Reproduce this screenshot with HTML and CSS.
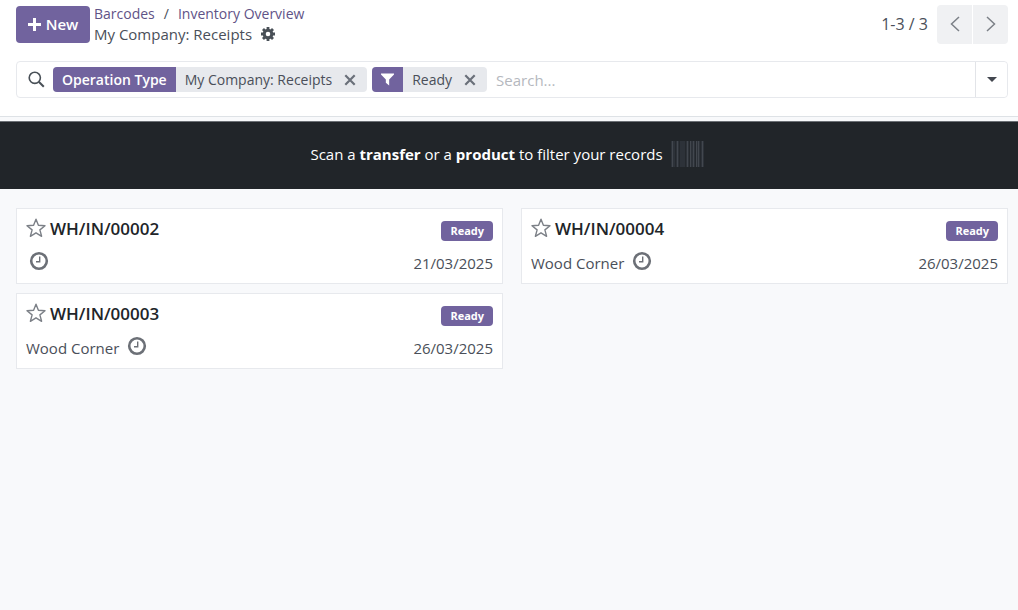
FILE: index.html
```html
<!DOCTYPE html>
<html lang="en">

<head>
    <meta charset="utf-8">
    <title>My Company: Receipts</title>
    <meta name="viewport" content="width=device-width, initial-scale=1">
    <link rel="stylesheet" href="styles.css">
</head>

<body>
    <!-- icons used more than once -->
    <svg class="sprite" aria-hidden="true">
        <symbol id="icon_star" viewBox="0 0 20 20">
            <path d="M10 1.2l2.4 6.1 6.6.4-5.1 4.2 1.7 6.4L10 14.8l-5.6 3.5 1.7-6.4L1 7.7l6.6-.4z" fill="none" stroke="currentColor" stroke-width="1.4" stroke-linejoin="round"/>
        </symbol>
        <symbol id="icon_clock" viewBox="0 0 20 20">
            <circle cx="10" cy="10" r="7.8" fill="none" stroke="currentColor" stroke-width="2.6"/>
            <path d="M10.7 5.5v5.2H7" fill="none" stroke="currentColor" stroke-width="1.4"/>
        </symbol>
        <symbol id="icon_close" viewBox="0 0 12 12">
            <path d="M1.3 1.3l9.4 9.4M10.7 1.3l-9.4 9.4" fill="none" stroke="currentColor" stroke-width="2.2"/>
        </symbol>
    </svg>

    <header>
        <div class="top-bar">
            <button type="button" class="btn-new">
                <svg width="13" height="13" viewBox="0 0 13 13"><path d="M5 0h3v5h5v3H8v5H5V8H0V5h5z" fill="currentColor"/></svg>
                New
            </button>
            <nav>
                <div class="breadcrumb">
                    <a href="#">Barcodes</a><span>/</span><a href="#">Inventory Overview</a>
                </div>
                <div class="current">
                    <h1>My Company: Receipts</h1>
                    <button type="button" class="btn-icon" aria-label="Actions">
                        <svg width="14" height="14" viewBox="0 0 14 14">
                            <circle cx="7" cy="7" r="3.8" fill="none" stroke="currentColor" stroke-width="3"/>
                            <path d="M7 0v3M7 11v3M0 7h3M11 7h3M2 2l2.2 2.2M9.8 9.8L12 12M12 2L9.8 4.2M4.2 9.8L2 12" stroke="currentColor" stroke-width="2.8"/>
                        </svg>
                    </button>
                </div>
            </nav>
            <div class="pager">
                <span>1-3 / 3</span>
                <div class="pager-buttons">
                    <button type="button" aria-label="Previous">
                        <svg width="10" height="16" viewBox="0 0 10 16"><path d="M9 1L1.5 8 9 15" fill="none" stroke="currentColor" stroke-width="1.5"/></svg>
                    </button>
                    <button type="button" aria-label="Next">
                        <svg width="10" height="16" viewBox="0 0 10 16"><path d="M1 1l7.5 7L1 15" fill="none" stroke="currentColor" stroke-width="1.5"/></svg>
                    </button>
                </div>
            </div>
        </div>

        <div class="search-bar">
            <svg class="search-icon" width="17" height="17" viewBox="0 0 17 17"><circle cx="6.8" cy="6.8" r="5.6" fill="none" stroke="currentColor" stroke-width="1.6"/><path d="M10.8 10.8l5 5" stroke="currentColor" stroke-width="2"/></svg>
            <div class="facet">
                <span class="facet-label">Operation Type</span>
                <span class="facet-value">My Company: Receipts</span>
                <button type="button" class="facet-remove" aria-label="Remove"><svg width="12" height="12"><use href="#icon_close"/></svg></button>
            </div>
            <div class="facet">
                <span class="facet-label"><svg width="13" height="13" viewBox="0 0 14 13"><path d="M0 0h14v1.2L8.8 6.4V13L5.2 10V6.4L0 1.2z" fill="currentColor"/></svg></span>
                <span class="facet-value">Ready</span>
                <button type="button" class="facet-remove" aria-label="Remove"><svg width="12" height="12"><use href="#icon_close"/></svg></button>
            </div>
            <input type="text" class="search-input" placeholder="Search..." aria-label="Search">
            <button type="button" class="search-toggle" aria-label="Search options">
                <svg width="10" height="5" viewBox="0 0 10 5"><path d="M0 0h10L5 5z" fill="currentColor"/></svg>
            </button>
        </div>
    </header>

    <div class="scan-banner">
        <p>Scan a <b>transfer</b> or a <b>product</b> to filter your records</p>
        <svg width="33" height="26" viewBox="0 0 33 26">
            <path d="M0 0h33v26H0z" fill="#2d3239"/>
            <path d="M1.5 0v26M6.5 0v26M16.5 0v26M19.5 0v26M22.5 0v26M25.5 0v26M27.5 0v26M31.5 0v26" stroke="#42474e"/>
            <path d="M4.5 0v26M8.5 0v26M14.5 0v26M18.5 0v26M24.5 0v26M29.5 0v26" stroke="#24282d"/>
        </svg>
    </div>

    <main class="cards">
        <article class="card">
            <div class="card-row">
                <button type="button" class="btn-icon star" aria-label="Favorite"><svg width="20" height="20"><use href="#icon_star"/></svg></button>
                <h2>WH/IN/00002</h2>
                <span class="badge">Ready</span>
            </div>
            <div class="card-row">
                <button type="button" class="btn-icon clock clock-alone" aria-label="Activities"><svg width="20" height="20"><use href="#icon_clock"/></svg></button>
                <span class="date">21/03/2025</span>
            </div>
        </article>
        <article class="card">
            <div class="card-row">
                <button type="button" class="btn-icon star" aria-label="Favorite"><svg width="20" height="20"><use href="#icon_star"/></svg></button>
                <h2>WH/IN/00004</h2>
                <span class="badge">Ready</span>
            </div>
            <div class="card-row">
                <span>Wood Corner</span>
                <button type="button" class="btn-icon clock" aria-label="Activities"><svg width="20" height="20"><use href="#icon_clock"/></svg></button>
                <span class="date">26/03/2025</span>
            </div>
        </article>
        <article class="card">
            <div class="card-row">
                <button type="button" class="btn-icon star" aria-label="Favorite"><svg width="20" height="20"><use href="#icon_star"/></svg></button>
                <h2>WH/IN/00003</h2>
                <span class="badge">Ready</span>
            </div>
            <div class="card-row">
                <span>Wood Corner</span>
                <button type="button" class="btn-icon clock" aria-label="Activities"><svg width="20" height="20"><use href="#icon_clock"/></svg></button>
                <span class="date">26/03/2025</span>
            </div>
        </article>
    </main>
</body>

</html>
```
FILE: styles.css
```css
* {
    box-sizing: border-box;
}

body {
    margin: 0;
    background: #f8f9fb;
    color: #4a4f59;
    font-family: "Open Sans", "Noto Sans", sans-serif;
    font-size: 15px;
    line-height: 20px;
}

button {
    font-family: inherit;
    font-size: 15px;
    padding: 0;
    border: none;
    cursor: pointer;
}

svg {
    display: block;
}

h1, h2, p {
    margin: 0;
}

a {
    color: #5f5387;
    font-weight: 500;
    text-decoration: none;
}

.sprite {
    position: absolute;
    width: 0;
    height: 0;
}

/* header */
header {
    background: #fff;
    padding: 4px 10px 18px 16px;
    border-bottom: 1px solid #dee2e6;
}

.top-bar {
    display: flex;
    align-items: center;
}

.btn-new {
    display: flex;
    align-items: center;
    justify-content: center;
    gap: 5px;
    width: 74px;
    height: 37px;
    margin-right: 4px;
    background: #71639e;
    color: #fff;
    font-weight: 600;
    border-radius: 4px;
}

.breadcrumb {
    font-size: 14px;
}

.breadcrumb span {
    margin: 0 9px;
}

.current {
    display: flex;
    align-items: center;
    gap: 9px;
}

h1 {
    font-size: 15px;
    font-weight: 400;
}

.btn-icon {
    background: none;
    color: #495057;
}

.pager {
    display: flex;
    align-items: center;
    gap: 9px;
    margin-left: auto;
    font-size: 16px;
}

.pager-buttons {
    display: flex;
    gap: 1px;
}

.pager-buttons button {
    display: flex;
    align-items: center;
    justify-content: center;
    width: 35px;
    height: 39px;
    background: #f0f1f3;
    color: #7c8087;
    border-radius: 4px 0 0 4px;
}

.pager-buttons button:last-child {
    border-radius: 0 4px 4px 0;
}

.search-bar {
    display: flex;
    align-items: center;
    gap: 5px;
    height: 37px;
    margin-top: 17px;
    padding-left: 11px;
    border: 1px solid #e7e9ed;
    border-radius: 4px;
}

.search-icon {
    color: #495057;
    margin-right: 3px;
}

.facet {
    display: flex;
    align-items: center;
    height: 25px;
    background: #e7e9ed;
    border-radius: 4px;
    font-size: 14px;
    overflow: hidden;
}

.facet-label {
    display: flex;
    align-items: center;
    height: 100%;
    padding: 0 9px;
    background: #71639e;
    color: #fff;
    font-weight: 600;
}

.facet-value {
    padding: 0 9px;
}

.facet-remove {
    display: flex;
    align-items: center;
    width: 26px;
    height: 25px;
    padding-left: 3px;
    background: none;
    color: #6a707a;
}

.search-input {
    flex: 1;
    min-width: 0;
    height: 33px;
    padding: 0 4px;
    border: none;
    outline: none;
    color: inherit;
    font-family: inherit;
    font-size: 15px;
}

.search-input::placeholder {
    color: #b5b8be;
}

.search-toggle {
    display: flex;
    align-items: center;
    justify-content: center;
    width: 32px;
    height: 35px;
    background: #fff;
    color: #43474f;
    border-left: 1px solid #e2e4e8;
    border-radius: 0 4px 4px 0;
}

/* barcode banner */
.scan-banner {
    display: flex;
    align-items: center;
    justify-content: center;
    gap: 8px;
    height: 68px;
    margin-top: 4px;
    padding: 0 4px 4px 0;
    background: #212529;
    border-top: 1px solid #6c7075;
    color: #fff;
}

/* transfer cards */
.cards {
    display: grid;
    grid-template-columns: 1fr 1fr;
    gap: 9px 18px;
    padding: 19px 10px 16px 16px;
}

.card {
    display: flex;
    flex-direction: column;
    gap: 10px;
    padding: 9px;
    background: #fff;
    border: 1px solid #e7e9ed;
}

.card-row {
    display: flex;
    align-items: center;
    height: 23px;
}

.card-row .btn-icon {
    padding-bottom: 3px;
}

h2 {
    padding-bottom: 2px;
    color: #212529;
    font-size: 17px;
    font-weight: 600;
}

.star {
    color: #7c8087;
    margin-right: 4px;
}

.clock {
    color: #6c7077;
    margin-left: 8px;
}

.clock-alone {
    margin-left: 3px;
}

.badge {
    margin: 2px 0 0 auto;
    padding: 0 9px;
    background: #71639e;
    color: #fff;
    font-size: 11px;
    font-weight: 700;
    border-radius: 4px;
}

.date {
    margin-left: auto;
}
```
